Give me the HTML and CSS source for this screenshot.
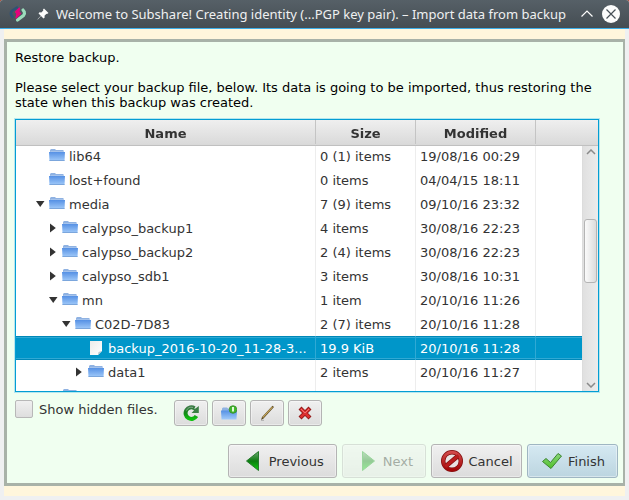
FILE: index.html
```html
<!DOCTYPE html>
<html lang="en">
<head>
  <meta charset="UTF-8">
  <meta name="viewport" content="width=device-width, initial-scale=1.0">
  <title>Subshare - Import data from backup</title>
  <link rel="stylesheet" href="styles.css">
</head>
<body>
  <!-- shared icons -->
  <svg class="defs" aria-hidden="true">
    <defs>
      <linearGradient id="folder-fill" x1="0" y1="0" x2="0" y2="1">
        <stop offset="0" stop-color="#5590e4"/>
        <stop offset="1" stop-color="#a2cbfa"/>
      </linearGradient>
      <linearGradient id="green-fill" x1="0" y1="0" x2="0" y2="1">
        <stop offset="0" stop-color="#3a7a44"/>
        <stop offset="0.5" stop-color="#138a17"/>
        <stop offset="1" stop-color="#0fc00f"/>
      </linearGradient>
      <linearGradient id="arrow-fill" x1="0" y1="0" x2="0" y2="1">
        <stop offset="0" stop-color="#6fa874"/>
        <stop offset="0.500" stop-color="#0c7d10"/>
        <stop offset="1" stop-color="#0fcf0f"/>
      </linearGradient>
      <linearGradient id="check-fill" x1="0" y1="0" x2="0" y2="1">
        <stop offset="0" stop-color="#8ad67c"/>
        <stop offset="1" stop-color="#4fc02a"/>
      </linearGradient>
      <linearGradient id="red-fill" x1="0" y1="0" x2="0" y2="1">
        <stop offset="0" stop-color="#d24a4a"/>
        <stop offset="1" stop-color="#a30808"/>
      </linearGradient>
      <linearGradient id="page-fill" x1="0" y1="0" x2="1" y2="1">
        <stop offset="0" stop-color="#ececea"/>
        <stop offset="1" stop-color="#ffffff"/>
      </linearGradient>
    </defs>
    <symbol id="folder" viewBox="0 0 16 16">
      <path d="M1 5V2L2 1H6L7 2H14.500V5Z" fill="#8fb2e2"/>
      <path d="M1.500 3H14.500V4H1.500Z" fill="#a5c3ec"/>
      <path d="M0 4H16L15.500 13H0.500Z" fill="url(#folder-fill)"/>
      <path d="M0.500 12H15.500V13H0.500Z" fill="#7ba6dc"/>
    </symbol>
    <symbol id="page" viewBox="0 0 16 16">
      <path d="M2 1H14V11L10 15H2Z" fill="url(#page-fill)"/>
      <path d="M14 11L10 15L10.500 12Z" fill="#b9c8cf"/>
    </symbol>
    <symbol id="open" viewBox="0 0 10 10">
      <path d="M0 2H8.500L4.200 8Z" fill="#333"/>
    </symbol>
    <symbol id="closed" viewBox="0 0 10 10">
      <path d="M1 0.500V9.500L6.800 5Z" fill="#333"/>
    </symbol>
  </svg>

  <div class="window">
    <header class="titlebar">
      <svg class="app-logo" viewBox="0 0 18 18">
        <path d="M8 2.500L3.500 5.500Q1.500 7 2 9.500L3.500 12" fill="none" stroke="#2f5277" stroke-width="2.600" stroke-linecap="round"/>
        <path d="M14 5L15.300 7Q16 9 14.500 10.500L8.500 15" fill="none" stroke="#9bdcbc" stroke-width="3.200" stroke-linecap="round"/>
        <path d="M10.500 3L6.500 7L8 8.500L7 13L11.500 8.500L10 7Z" fill="#e5007d" stroke="#e5007d" stroke-width="1.200" stroke-linejoin="round"/>
      </svg>
      <svg class="pin" viewBox="0 0 12 12">
        <path d="M7 0.500L11.500 5L10 6L9.500 5.700L7.500 7.700L7.700 9.500L6.500 10.500L4 8L0.800 11.400L0.500 11.200L3.800 7.800L1.500 5.500L2.500 4.300L4.300 4.500L6.300 2.500L6 1.500Z" fill="#fcfcfc"/>
      </svg>
      <h1 class="title">Welcome to Subshare! Creating identity (...PGP key pair). – Import data from backup</h1>
      <button class="title-button" type="button" aria-label="Maximize">
        <svg viewBox="0 0 18 18"><path d="M3.500 11.500L9 6L14.500 11.500" fill="none" stroke="#fcfcfc" stroke-width="1.200"/></svg>
      </button>
      <button class="title-button" type="button" aria-label="Close">
        <svg viewBox="0 0 18 18">
          <circle cx="9" cy="9" r="9" fill="#fcfcfc"/>
          <path d="M4.500 4.500L13.500 13.500M13.500 4.500L4.500 13.500" stroke="#475057" stroke-width="1.200"/>
        </svg>
      </button>
    </header>

    <main class="frame">
      <section class="wizard">
        <div class="page">
          <p class="intro">Restore backup.</p>
          <p class="intro">Please select your backup file, below. Its data is going to be imported, thus restoring the state when this backup was created.</p>

          <div class="file-browser">
            <table class="files">
              <colgroup>
                <col class="col-name">
                <col class="col-size">
                <col class="col-modified">
                <col>
              </colgroup>
              <thead>
                <tr><th>Name</th><th>Size</th><th>Modified</th><th></th></tr>
              </thead>
              <tbody>
                <tr>
                  <td><div class="entry level-1"><span class="arrow"></span><svg class="icon"><use href="#folder"/></svg><span class="name">lib64</span></div></td>
                  <td>0 (1) items</td><td>19/08/16 00:29</td><td></td>
                </tr>
                <tr>
                  <td><div class="entry level-1"><span class="arrow"></span><svg class="icon"><use href="#folder"/></svg><span class="name">lost+found</span></div></td>
                  <td>0 items</td><td>04/04/15 18:11</td><td></td>
                </tr>
                <tr>
                  <td><div class="entry level-1"><svg class="arrow"><use href="#open"/></svg><svg class="icon"><use href="#folder"/></svg><span class="name">media</span></div></td>
                  <td>7 (9) items</td><td>09/10/16 23:32</td><td></td>
                </tr>
                <tr>
                  <td><div class="entry level-2"><svg class="arrow"><use href="#closed"/></svg><svg class="icon"><use href="#folder"/></svg><span class="name">calypso_backup1</span></div></td>
                  <td>4 items</td><td>30/08/16 22:23</td><td></td>
                </tr>
                <tr>
                  <td><div class="entry level-2"><svg class="arrow"><use href="#closed"/></svg><svg class="icon"><use href="#folder"/></svg><span class="name">calypso_backup2</span></div></td>
                  <td>2 (4) items</td><td>30/08/16 22:23</td><td></td>
                </tr>
                <tr>
                  <td><div class="entry level-2"><svg class="arrow"><use href="#closed"/></svg><svg class="icon"><use href="#folder"/></svg><span class="name">calypso_sdb1</span></div></td>
                  <td>3 items</td><td>30/08/16 10:31</td><td></td>
                </tr>
                <tr>
                  <td><div class="entry level-2"><svg class="arrow"><use href="#open"/></svg><svg class="icon"><use href="#folder"/></svg><span class="name">mn</span></div></td>
                  <td>1 item</td><td>20/10/16 11:26</td><td></td>
                </tr>
                <tr>
                  <td><div class="entry level-3"><svg class="arrow"><use href="#open"/></svg><svg class="icon"><use href="#folder"/></svg><span class="name">C02D-7D83</span></div></td>
                  <td>2 (7) items</td><td>20/10/16 11:28</td><td></td>
                </tr>
                <tr class="selected">
                  <td><div class="entry level-4"><span class="arrow"></span><svg class="icon"><use href="#page"/></svg><span class="name">backup_2016-10-20_11-28-3...</span></div></td>
                  <td>19.9 KiB</td><td>20/10/16 11:28</td><td></td>
                </tr>
                <tr>
                  <td><div class="entry level-4"><svg class="arrow"><use href="#closed"/></svg><svg class="icon"><use href="#folder"/></svg><span class="name">data1</span></div></td>
                  <td>2 items</td><td>20/10/16 11:27</td><td></td>
                </tr>
                <tr>
                  <td><div class="entry level-2"><span class="arrow"></span><svg class="icon"><use href="#folder"/></svg></div></td>
                  <td></td><td></td><td></td>
                </tr>
              </tbody>
            </table>
            <div class="scrollbar">
              <svg class="scroll-arrow" viewBox="0 0 10 6"><path d="M1 5L5 1L9 5" fill="none" stroke="#8a8a8a" stroke-width="1.500"/></svg>
              <div class="track"><div class="thumb"></div></div>
              <svg class="scroll-arrow" viewBox="0 0 10 6"><path d="M1 1L5 5L9 1" fill="none" stroke="#8a8a8a" stroke-width="1.500"/></svg>
            </div>
          </div>

          <div class="tools">
            <label class="hidden-files"><input type="checkbox" class="checkbox">Show hidden files.</label>
            <button class="button tool" type="button" aria-label="Refresh">
              <svg viewBox="0 0 16 16">
                <path d="M13.400 11A5.800 5.800 0 1 1 11.500 3.200" fill="none" stroke="url(#green-fill)" stroke-width="4"/>
                <path d="M15.800 1V8H8.500L11 5.500L9.500 4L12.500 3.500Z" fill="#3b7f44"/>
                <path d="M3.500 5.500A5.500 5.500 0 0 1 10 2.500" fill="none" stroke="#7fa886"/>
              </svg>
            </button>
            <button class="button tool" type="button" aria-label="New folder">
              <svg viewBox="0 0 16 16">
                <path d="M1 6V3.500L2 2.500H6L7 3.500H14.500V6Z" fill="#8fb2e2"/>
                <path d="M0 5.500H16L15.500 14.500H0.500Z" fill="url(#folder-fill)"/>
                <circle cx="12" cy="4.500" r="3.800" fill="#42b82c" stroke="#398c2c" stroke-width="0.800"/>
                <path d="M12 2V6.500" stroke="#e2f8dc" stroke-width="2"/>
              </svg>
            </button>
            <button class="button tool" type="button" aria-label="Rename">
              <svg viewBox="0 0 16 16">
                <path d="M2 15L3 12L13.500 0.800L15 2L4.500 13.500Z" fill="#5c4a24"/>
                <path d="M3.800 12.500L13.500 2" stroke="#d2b160" stroke-width="1.100"/>
                <path d="M2 15.300H5" stroke="#aaa"/>
              </svg>
            </button>
            <button class="button tool" type="button" aria-label="Delete">
              <svg viewBox="0 0 16 16">
                <path d="M4.500 4.500L11.500 11.500M11.500 4.500L4.500 11.500" stroke="#8f1616" stroke-width="4.200" stroke-linecap="square"/>
                <path d="M4.500 4.500L11.500 11.500M11.500 4.500L4.500 11.500" stroke="#dc3030" stroke-width="2.600" stroke-linecap="square"/>
                <path d="M4 4L8 8L12 4" fill="none" stroke="#ee7474"/>
              </svg>
            </button>
          </div>
        </div>

        <footer class="actions">
          <button class="button nav" type="button">
            <svg viewBox="0 0 24 24"><path d="M17.500 2.500V21.500L5.500 12Z" fill="url(#arrow-fill)" stroke="#277a2d" stroke-linejoin="round"/></svg>
            Previous
          </button>
          <button class="button nav" type="button" disabled>
            <svg viewBox="0 0 24 24"><path d="M7.500 2.500V21.500L19.500 12Z" fill="url(#arrow-fill)" stroke="#1c9a22" stroke-linejoin="round"/></svg>
            Next
          </button>
          <button class="button wide" type="button">
            <svg viewBox="0 0 24 24">
              <circle cx="12" cy="12" r="8.800" fill="#e9e4e3" stroke="#831010" stroke-width="4.400"/>
              <path d="M5.500 17.500L18.500 6.500" stroke="#831010" stroke-width="4.600"/>
              <circle cx="12" cy="12" r="8.800" fill="none" stroke="url(#red-fill)" stroke-width="3"/>
              <path d="M5.500 17.500L18.500 6.500" stroke="#b81e1e" stroke-width="3.200"/>
            </svg>
            Cancel
          </button>
          <button class="button wide default" type="button">
            <svg viewBox="0 0 24 24"><path d="M2.500 12.500L6 9.500L10.500 13.500L18 4.500L21.500 7L11 19.500Z" fill="url(#check-fill)" stroke="#3d8530" stroke-linejoin="round"/></svg>
            Finish
          </button>
        </footer>
      </section>
    </main>
  </div>
</body>
</html>
```

FILE: styles.css
```css
* {
  box-sizing: border-box;
}

body {
  margin: 0;
  background: #b0442c;
  font-family: 'DejaVu Sans', sans-serif;
  font-size: 13px;
  color: #333;
}

.defs {
  position: absolute;
  width: 0;
  height: 0;
}

.window {
  display: flex;
  flex-direction: column;
  height: 100vh;
  background: #eff0f1;
  border-radius: 3px 3px 0 0;
  overflow: hidden;
}

/* title bar */
.titlebar {
  display: flex;
  align-items: center;
  flex: none;
  height: 29px;
  padding: 0 9px;
  background: linear-gradient(to bottom, #566067, #454d53);
  border-bottom: 1px solid #3daee9;
  color: #eff0f1;
}

.app-logo {
  width: 18px;
  height: 18px;
}

.pin {
  width: 12px;
  height: 12px;
  margin: 0 7px 0 10px;
}

.title {
  flex: 1;
  margin: 0;
  font-family: 'Noto Sans', sans-serif;
  font-size: 13px;
  font-weight: normal;
  white-space: nowrap;
}

.title-button {
  width: 18px;
  height: 18px;
  margin-left: 6px;
  padding: 0;
  border: none;
  background: none;
}

.title-button svg {
  display: block;
}

/* wizard */
.frame {
  display: flex;
  flex: 1;
  min-height: 0;
  margin: 0 4px 4px;
  padding: 10px 0;
  background: #fff6dc;
}

.wizard {
  display: flex;
  flex-direction: column;
  flex: 1;
  min-width: 0;
  padding: 8px 5px 5px 8px;
  border: 3px solid #a8b2a8;
  border-right-width: 2px;
  background: #f0fff0;
}

.page {
  display: flex;
  flex-direction: column;
  flex: 1;
  min-height: 0;
  margin-right: 19px;
}

.intro {
  margin: 0 -8px 15px 0;
  line-height: 15px;
  color: #000;
}

/* file table */
.file-browser {
  position: relative;
  flex: 1;
  min-height: 0;
  margin-top: -6px;
  border: 1px solid #039ed3;
  box-shadow: 0 0 0 1px #b5e6ee;
  background: #fff;
  overflow: hidden;
}

.files {
  width: 100%;
  table-layout: fixed;
  border-collapse: separate;
  border-spacing: 0;
}

.col-name {
  width: 300px;
}

.col-size {
  width: 100px;
}

.col-modified {
  width: 120px;
}

.files th {
  position: sticky;
  top: 0;
  z-index: 1;
  height: 24px;
  padding: 2px 0 0;
  border-right: 1px solid #c4c4c4;
  background: linear-gradient(to bottom, #efefef, #dadada);
  box-shadow: 0 1px #d9d9d9, 0 2px #c0c0c0;
}

.files th:last-child {
  border-right: none;
}

.files td {
  height: 24px;
  padding: 0 4px;
  border-right: 1px solid #ededed;
  white-space: nowrap;
}

.files td:first-child {
  padding: 0;
}

.files td:last-child {
  border-right: none;
}

.files .selected td {
  background: #0096c9;
  border-right-color: #30a9d4;
  box-shadow: inset 0 1px #0088b8, inset 0 2px #30a9d4, inset 0 -1px #0088b8, inset 0 -2px #30a9d4;
  color: #fff;
}

.entry {
  display: flex;
  align-items: center;
}

.level-1 {
  padding-left: 20px;
}

.level-2 {
  padding-left: 33px;
}

.level-3 {
  padding-left: 46px;
}

.level-4 {
  padding-left: 59px;
}

.arrow {
  width: 10px;
  height: 10px;
  margin-right: 3px;
}

.icon {
  width: 16px;
  height: 16px;
  margin-right: 4px;
}

.scrollbar {
  position: absolute;
  top: 26px;
  right: 0;
  bottom: 0;
  display: flex;
  flex-direction: column;
  align-items: center;
  width: 16px;
  padding: 3px 1px;
  border-left: 1px solid #dcdcdc;
  background: linear-gradient(to right, #e0e0e0, #ececec);
}

.scroll-arrow {
  width: 10px;
  height: 6px;
}

.track {
  flex: 1;
  width: 100%;
  padding-top: 64px;
}

.thumb {
  height: 64px;
  border: 1px solid #b4b4b4;
  border-radius: 3px;
  background: linear-gradient(to right, #fafafa, #dcdcdc);
}

/* controls */
.tools {
  display: flex;
  align-items: flex-start;
  gap: 4px;
  margin: 8px 0 18px;
}

.hidden-files {
  display: flex;
  align-items: center;
  gap: 6px;
  height: 18px;
  margin-right: 12px;
}

.checkbox {
  appearance: none;
  width: 18px;
  height: 18px;
  margin: 0;
  border: 1px solid #b8b8b8;
  border-radius: 2px;
  background: linear-gradient(to bottom, #f0f0f0, #dedede);
}

.button {
  display: flex;
  align-items: center;
  justify-content: center;
  gap: 4px;
  height: 34px;
  padding: 0 8px;
  border: 1px solid #b4b4b4;
  border-radius: 3px;
  background: linear-gradient(to bottom, #f0f0f0, #dcdcdc);
  box-shadow: inset 0 0 0 1px rgba(255, 255, 255, 0.4);
  font-family: inherit;
  font-size: 13px;
  color: #333;
}

.button svg {
  flex: none;
  width: 24px;
  height: 24px;
}

.tool {
  height: 26px;
}

.tool svg {
  width: 16px;
  height: 16px;
}

.actions {
  display: flex;
  justify-content: flex-end;
  gap: 5px;
}

.nav {
  padding: 0 12px;
}

.wide {
  min-width: 91px;
}

.default {
  border-color: #9fb6c2;
  background: linear-gradient(to bottom, #d5e9f2, #bcd5e0);
}

.button:disabled {
  opacity: 0.4;
}
```
